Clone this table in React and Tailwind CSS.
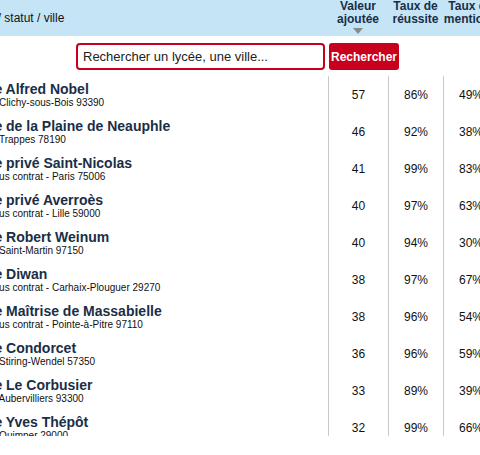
import React from 'react';

const lycees = [
  { nom: 'Lycée Alfred Nobel', info: 'Public - Clichy-sous-Bois 93390', va: 57, reussite: '86%', mentions: '49%' },
  { nom: 'Lycée de la Plaine de Neauphle', info: 'Public - Trappes 78190', va: 46, reussite: '92%', mentions: '38%' },
  { nom: 'Lycée privé Saint-Nicolas', info: 'Privé sous contrat - Paris 75006', va: 41, reussite: '99%', mentions: '83%' },
  { nom: 'Lycée privé Averroès', info: 'Privé sous contrat - Lille 59000', va: 40, reussite: '97%', mentions: '63%' },
  { nom: 'Lycée Robert Weinum', info: 'Public - Saint-Martin 97150', va: 40, reussite: '94%', mentions: '30%' },
  { nom: 'Lycée Diwan', info: 'Privé sous contrat - Carhaix-Plouguer 29270', va: 38, reussite: '97%', mentions: '67%' },
  { nom: 'Lycée Maîtrise de Massabielle', info: 'Privé sous contrat - Pointe-à-Pitre 97110', va: 38, reussite: '96%', mentions: '54%' },
  { nom: 'Lycée Condorcet', info: 'Public - Stiring-Wendel 57350', va: 36, reussite: '96%', mentions: '59%' },
  { nom: 'Lycée Le Corbusier', info: 'Public - Aubervilliers 93300', va: 33, reussite: '89%', mentions: '39%' },
  { nom: 'Lycée Yves Thépôt', info: 'Public - Quimper 29000', va: 32, reussite: '99%', mentions: '66%' },
];

const Ligne = ({ lycee }) => (
  <div className="flex h-[37px]">
    {/* Nom / statut / ville */}
    <div className="w-[365px] shrink-0 flex flex-col justify-center">
      <div className="text-[14px] leading-[16px] font-bold text-[#1a2e47] whitespace-nowrap">{lycee.nom}</div>
      <div className="text-[10px] leading-[12px] text-[#111] whitespace-nowrap">{lycee.info}</div>
    </div>
    <div className="w-[60px] shrink-0 border-l border-[#c8c8c8] flex items-center justify-center text-[12px] text-[#111]">
      {lycee.va}
    </div>
    <div className="w-[55px] shrink-0 border-l border-[#c8c8c8] flex items-center justify-center text-[12px] text-[#111]">
      {lycee.reussite}
    </div>
    <div className="w-[55px] shrink-0 border-l border-[#c8c8c8] flex items-center justify-center text-[12px] text-[#111]">
      {lycee.mentions}
    </div>
  </div>
);

const App = () => {
  return (
    <div className="w-[480px] h-[455px] overflow-hidden bg-white font-['Liberation_Sans',Arial,sans-serif]">
      {/* En-tête du tableau */}
      <div className="h-[36px] bg-[#c5e5f6] overflow-hidden">
        <div className="flex h-full -ml-[37px]">
          <div className="w-[365px] shrink-0 flex items-center pl-[6px] text-[12px] text-[#111] whitespace-nowrap">
            Nom / statut / ville
          </div>
          <div className="w-[60px] shrink-0 flex flex-col items-center text-[12px] leading-[13px] font-bold text-[#1a2e47] text-center">
            <span>Valeur</span>
            <span>ajoutée</span>
            <span className="mt-[2px] w-0 h-0 border-l-[5px] border-r-[5px] border-t-[6px] border-l-transparent border-r-transparent border-t-[#8a8a8a]" />
          </div>
          <div className="w-[55px] shrink-0 flex flex-col items-center text-[12px] leading-[13px] font-bold text-[#1a2e47] text-center">
            <span>Taux de</span>
            <span>réussite</span>
          </div>
          <div className="w-[55px] shrink-0 flex flex-col items-center text-[12px] leading-[13px] font-bold text-[#1a2e47] text-center whitespace-nowrap">
            <span>Taux de</span>
            <span>mentions</span>
          </div>
        </div>
      </div>

      {/* Recherche */}
      <div className="flex mt-[7px] h-[27px] pl-[76px] gap-1">
        <input
          type="text"
          placeholder="Rechercher un lycée, une ville..."
          className="w-[249px] h-full border-2 border-[#c8001e] rounded-[4px] px-[5px] text-[13px] text-[#111] placeholder:text-[#222] outline-none"
        />
        <button className="w-[70px] h-full bg-[#c8001e] rounded-[3px] text-white text-[12px] font-bold">
          Rechercher
        </button>
      </div>

      {/* Liste des lycées */}
      <div className="mt-[6px] h-[360px] overflow-hidden">
        <div className="-ml-[37px]">
          {lycees.map((lycee, index) => (
            <Ligne key={index} lycee={lycee} />
          ))}
        </div>
      </div>
    </div>
  );
};

export default App;
